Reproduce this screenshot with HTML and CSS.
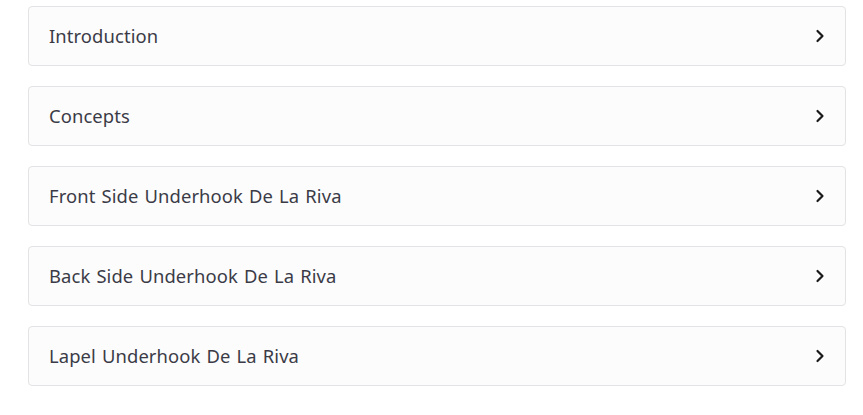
FILE: index.html
```html
<!DOCTYPE html>
<html lang="en">
<head>
<meta charset="utf-8">
<link rel="stylesheet" href="styles.css">
</head>
<body>
<div class="list">
  <div class="item"><span class="title">Introduction</span><svg class="chev" viewBox="0 0 10 14" width="10" height="14"><path d="M2.5 2 L7.5 7 L2.5 12" fill="none" stroke="#1a1a1a" stroke-width="2.2" stroke-linecap="round" stroke-linejoin="round"/></svg></div>
  <div class="item"><span class="title">Concepts</span><svg class="chev" viewBox="0 0 10 14" width="10" height="14"><path d="M2.5 2 L7.5 7 L2.5 12" fill="none" stroke="#1a1a1a" stroke-width="2.2" stroke-linecap="round" stroke-linejoin="round"/></svg></div>
  <div class="item"><span class="title">Front Side Underhook De La Riva</span><svg class="chev" viewBox="0 0 10 14" width="10" height="14"><path d="M2.5 2 L7.5 7 L2.5 12" fill="none" stroke="#1a1a1a" stroke-width="2.2" stroke-linecap="round" stroke-linejoin="round"/></svg></div>
  <div class="item"><span class="title">Back Side Underhook De La Riva</span><svg class="chev" viewBox="0 0 10 14" width="10" height="14"><path d="M2.5 2 L7.5 7 L2.5 12" fill="none" stroke="#1a1a1a" stroke-width="2.2" stroke-linecap="round" stroke-linejoin="round"/></svg></div>
  <div class="item"><span class="title">Lapel Underhook De La Riva</span><svg class="chev" viewBox="0 0 10 14" width="10" height="14"><path d="M2.5 2 L7.5 7 L2.5 12" fill="none" stroke="#1a1a1a" stroke-width="2.2" stroke-linecap="round" stroke-linejoin="round"/></svg></div>
</div>
</body>
</html>
```

FILE: styles.css
```css
html, body {
  margin: 0;
  background: #ffffff;
}
body {
  padding: 6px 17px 0 28px;
  font-family: "Noto Sans", "Open Sans", sans-serif;
}
.list {
  display: flex;
  flex-direction: column;
  gap: 20px;
}
.item {
  display: flex;
  align-items: center;
  justify-content: space-between;
  height: 60px;
  box-sizing: border-box;
  padding: 0 20px 2px 20px;
  border: 1px solid #e3e3e6;
  border-radius: 4px;
  background: #fcfcfc;
}
.title {
  font-size: 18.4px;
  color: #3b3b47;
  letter-spacing: 0.1px;
  word-spacing: 1.2px;
}
.chev {
  display: block;
  margin-top: 2px;
}
```
